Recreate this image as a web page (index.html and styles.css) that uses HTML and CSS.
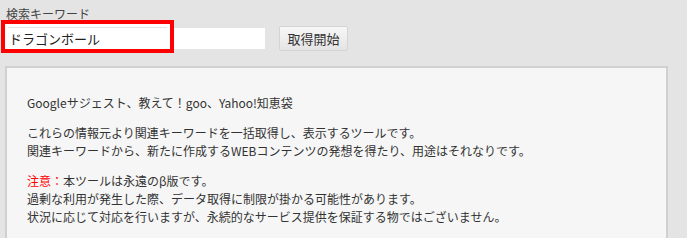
FILE: index.html
```html
<!DOCTYPE html>
<html lang="ja">

<head>
    <meta charset="UTF-8" />
    <title>関連キーワード取得ツール</title>
    <link rel="stylesheet" href="styles.css">
</head>

<body>
    <div class="buscador">
        <label class="etiqueta" for="keyword">検索キーワード</label>
        <div class="fila-buscador">
            <div class="campo">
                <input type="text" id="keyword" class="entrada" value="ドラゴンボール">
                <!-- marca roja encima del campo -->
                <div class="marca"></div>
            </div>
            <button class="boton">取得開始</button>
        </div>
    </div>

    <div class="panel">
        <p>Googleサジェスト、教えて！goo、Yahoo!知恵袋</p>
        <p>これらの情報元より関連キーワードを一括取得し、表示するツールです。<br>
            関連キーワードから、新たに作成するWEBコンテンツの発想を得たり、用途はそれなりです。</p>
        <p><span class="aviso">注意：</span>本ツールは永遠のβ版です。<br>
            過剰な利用が発生した際、データ取得に制限が掛かる可能性があります。<br>
            状況に応じて対応を行いますが、永続的なサービス提供を保証する物ではございません。</p>
    </div>
</body>

</html>
```

FILE: styles.css
```css
body {
    font-family: "Noto Sans CJK JP", "Noto Sans", sans-serif;
    margin: 0;
    background-color: #e4e4e4;
    color: #333;
    overflow: hidden;
}

.buscador {
    padding: 6px 0 0 6px;
}

.etiqueta {
    display: block;
    font-size: 12px;
    line-height: 16px;
    color: #444;
}

.fila-buscador {
    display: flex;
    align-items: center;
    margin-top: 4px;
    height: 25px;
}

.campo {
    position: relative;
}

.entrada {
    display: block;
    width: 259px;
    height: 21px;
    box-sizing: border-box;
    border: none;
    padding: 0 0 0 3px;
    margin: 0;
    background-color: white;
    font-family: "Noto Sans CJK JP", sans-serif;
    font-size: 13px;
    color: #222;
    outline: none;
}

.marca {
    position: absolute;
    left: -5px;
    top: -8px;
    width: 173px;
    height: 33px;
    box-sizing: border-box;
    border: 4px solid #ff0000;
    box-shadow: inset 0 0 0 3px white;
    pointer-events: none;
}

.boton {
    margin-left: 14px;
    width: 69px;
    height: 25px;
    padding: 0;
    border: 1px solid #d4d4d4;
    border-radius: 2px;
    background: linear-gradient(#f7f7f7, #e4e4e4);
    font-family: "Noto Sans CJK JP", sans-serif;
    font-size: 13px;
    color: #333;
    cursor: pointer;
}

.panel {
    margin: 15px 0 0 5px;
    width: 663px;
    box-sizing: border-box;
    border: 2px solid #d0d0d0;
    background-color: #f6f6f6;
    padding: 26px 20px 20px 20px;
    font-size: 12px;
    line-height: 18px;
}

.panel p {
    margin: 0 0 12px 0;
}

.aviso {
    color: #ff0000;
}
```
